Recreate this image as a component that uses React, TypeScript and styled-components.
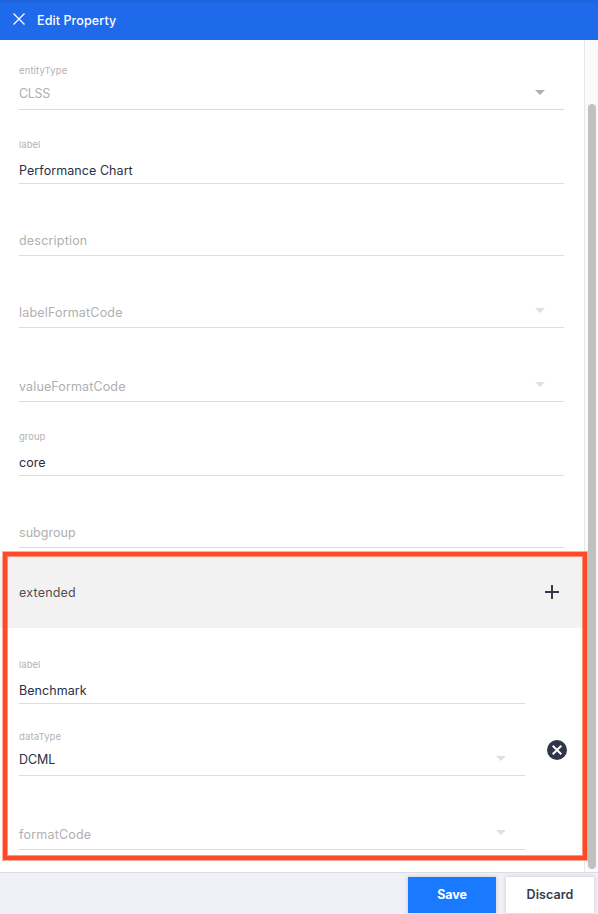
import React from "react";
import styled, { createGlobalStyle } from "styled-components";

const GlobalStyle = createGlobalStyle`
  * { box-sizing: border-box; }
  body {
    margin: 0;
    background: #fff;
    color: #2a2f45;
    font-family: Inter, "Liberation Sans", sans-serif;
    font-size: 13px;
  }
`;

const Panel = styled.div`
  position: relative;
  display: flex;
  flex-direction: column;
  width: 598px;
  height: 914px;
  overflow: hidden;
`;

const Header = styled.header`
  display: flex;
  align-items: center;
  flex: none;
  height: 40px;
  padding: 0 0 1px 13px;
  gap: 12px;
  color: #fff;
  background: linear-gradient(#1c62dc, #1f6aeb 5px, #1f6aeb);
`;

const CloseIcon = styled.svg`
  width: 12px;
  height: 12px;
  margin-bottom: 1px;
`;

const Title = styled.h1`
  margin: 2px 0 0;
  font-size: 12.5px;
  font-weight: 500;
  line-height: 20px;
  letter-spacing: 0.1px;
  white-space: nowrap;
`;

const Body = styled.div`
  display: flex;
  flex: 1;
  min-height: 0;
`;

const Form = styled.main`
  width: 584px;
`;

const Fields = styled.div<{ $right: number }>`
  display: flex;
  flex-direction: column;
  padding: 0 ${(p) => p.$right}px 0 19px;
`;

const FieldRow = styled.div<{ $height: number; $solid?: boolean }>`
  display: flex;
  justify-content: space-between;
  align-items: flex-end;
  height: ${(p) => p.$height}px;
  border-bottom: 1px solid ${(p) => (p.$solid ? "#d8d9da" : "#dadce6")};
`;

const FieldText = styled.div`
  display: flex;
  flex-direction: column;
  justify-content: flex-end;
`;

const Caption = styled.span<{ $track: number }>`
  height: 12px;
  font-size: 9.5px;
  line-height: 12px;
  letter-spacing: ${(p) => p.$track}px;
  color: #b3b3b3;
`;

const Value = styled.span<{ $lift: number; $gap: number; $muted?: boolean; $track: number }>`
  height: 20px;
  margin: ${(p) => p.$gap}px 0 ${(p) => p.$lift}px;
  font-size: 12.5px;
  line-height: 20px;
  letter-spacing: ${(p) => p.$track}px;
  white-space: nowrap;
  color: ${(p) => (p.$muted ? "#b0b0b0" : "#2a2f45")};
`;

const Arrow = styled.svg<{ $dark?: boolean }>`
  width: 10px;
  height: 5px;
  margin: 0 19px 14px 0;
  fill: ${(p) => (p.$dark ? "#b0b0b0" : "#dce0ea")};
`;

const SectionBar = styled.div`
  display: flex;
  align-items: center;
  justify-content: space-between;
  height: 72px;
  margin-top: 8px;
  padding: 0 25px 0 19px;
  background: #f2f2f2;
`;

const SectionName = styled.span`
  margin-top: 2px;
  font-size: 12.5px;
  line-height: 20px;
  letter-spacing: 0.2px;
  color: #505050;
`;

const Group = styled.div`
  display: grid;
  grid-template-columns: 544px 40px;
`;

const RemoveButton = styled.button`
  align-self: center;
  justify-self: start;
  width: 20px;
  height: 20px;
  margin: 22px 0 0 3px;
  padding: 0;
  border: 0;
  background: none;
`;

const ScrollTrack = styled.div`
  width: 14px;
  padding: 64px 0 0 3px;
  border-left: 1px solid #e7e7e7;
  background: #fafafa;
`;

const ScrollThumb = styled.div`
  width: 8px;
  height: 765px;
  border-radius: 4px;
  background: #c1c1c1;
`;

const Footer = styled.footer`
  display: flex;
  justify-content: flex-end;
  flex: none;
  height: 42px;
  gap: 10px;
  padding: 4px 4px 1px;
  border-top: 1px solid #d9dde8;
  background: #f0f1f7;
`;

const Button = styled.button<{ $primary?: boolean }>`
  width: 88px;
  height: 36px;
  padding: 0 0 2px;
  border: 0;
  font: ${(p) => (p.$primary ? 700 : 600)} 12.5px Inter, "Liberation Sans", sans-serif;
  letter-spacing: ${(p) => (p.$primary ? -0.1 : 0.1)}px;
  color: ${(p) => (p.$primary ? "#fff" : "#363b4d")};
  background: ${(p) => (p.$primary ? "#197aff" : "#fff")};
  box-shadow: 0 0 4px rgba(40, 45, 70, 0.22);
`;

const Highlight = styled.div`
  position: absolute;
  left: 3px;
  top: 552px;
  width: 584px;
  height: 308px;
  border: 4px solid #ff4927;
  box-shadow: 0 0 0 1px rgba(255, 73, 39, 0.45), inset 0 0 0 1px rgba(255, 73, 39, 0.6);
  pointer-events: none;
`;

type FieldData = {
  height: number;
  name: string;
  value?: string;
  select?: boolean;
  disabled?: boolean;
  track?: number;
  nameTrack?: number;
};

const mainFields: FieldData[] = [
  { height: 70, name: "entityType", value: "CLSS", select: true, disabled: true, track: -0.35, nameTrack: 0.12 },
  { height: 74, name: "label", value: "Performance Chart", track: 0.07 },
  { height: 72, name: "description", track: 0.2 },
  { height: 72, name: "labelFormatCode", select: true, track: 0.18 },
  { height: 74, name: "valueFormatCode", select: true, track: 0.13 },
  { height: 74, name: "group", value: "core" },
  { height: 72, name: "subgroup", track: 0.05 },
];

const extendedFields: FieldData[] = [
  { height: 76, name: "label", value: "Benchmark", track: 0.05 },
  { height: 72, name: "dataType", value: "DCML", select: true, track: -0.1, nameTrack: 0.12 },
  { height: 74, name: "formatCode", select: true, track: 0.2 },
];

function Field({ height, name, value, select, disabled, track = 0, nameTrack = 0 }: FieldData) {
  const lift = value ? (select ? 5 : 2) : 4;
  return (
    <FieldRow $height={height} $solid={disabled}>
      <FieldText>
        {value && <Caption $track={nameTrack}>{name}</Caption>}
        <Value $lift={lift} $gap={value ? 12 - lift : 0} $muted={!value || disabled} $track={track}>
          {value ?? name}
        </Value>
      </FieldText>
      {select && (
        <Arrow $dark={disabled} viewBox="0 0 10 5">
          <path d="M0 0h10L5 5z" />
        </Arrow>
      )}
    </FieldRow>
  );
}

export default function App() {
  return (
    <Panel>
      <GlobalStyle />
      <Header>
        <CloseIcon viewBox="0 0 12 12" fill="none" stroke="currentColor" strokeWidth="1.3">
          <path d="M.5.5l11 11M11.5.5l-11 11" />
        </CloseIcon>
        <Title>Edit Property</Title>
      </Header>
      <Body>
        <Form>
          <Fields $right={20}>
            {mainFields.map((f) => (
              <Field key={f.name} {...f} />
            ))}
          </Fields>
          <SectionBar>
            <SectionName>extended</SectionName>
            <svg width="14" height="14" viewBox="0 0 14 14" stroke="#343a4b" strokeWidth="2">
              <path d="M7 0v14M0 7h14" />
            </svg>
          </SectionBar>
          <Group>
            <Fields $right={19}>
              {extendedFields.map((f) => (
                <Field key={f.name} {...f} />
              ))}
            </Fields>
            <RemoveButton aria-label="Remove">
              <svg width="20" height="20" viewBox="0 0 20 20" display="block">
                <circle cx="10" cy="10" r="10" fill="#303648" />
                <path d="M5.7 5.7l8.6 8.6M14.3 5.7l-8.6 8.6" stroke="#fff" strokeWidth="2" />
              </svg>
            </RemoveButton>
          </Group>
        </Form>
        <ScrollTrack>
          <ScrollThumb />
        </ScrollTrack>
      </Body>
      <Footer>
        <Button $primary>Save</Button>
        <Button>Discard</Button>
      </Footer>
      <Highlight />
    </Panel>
  );
}
